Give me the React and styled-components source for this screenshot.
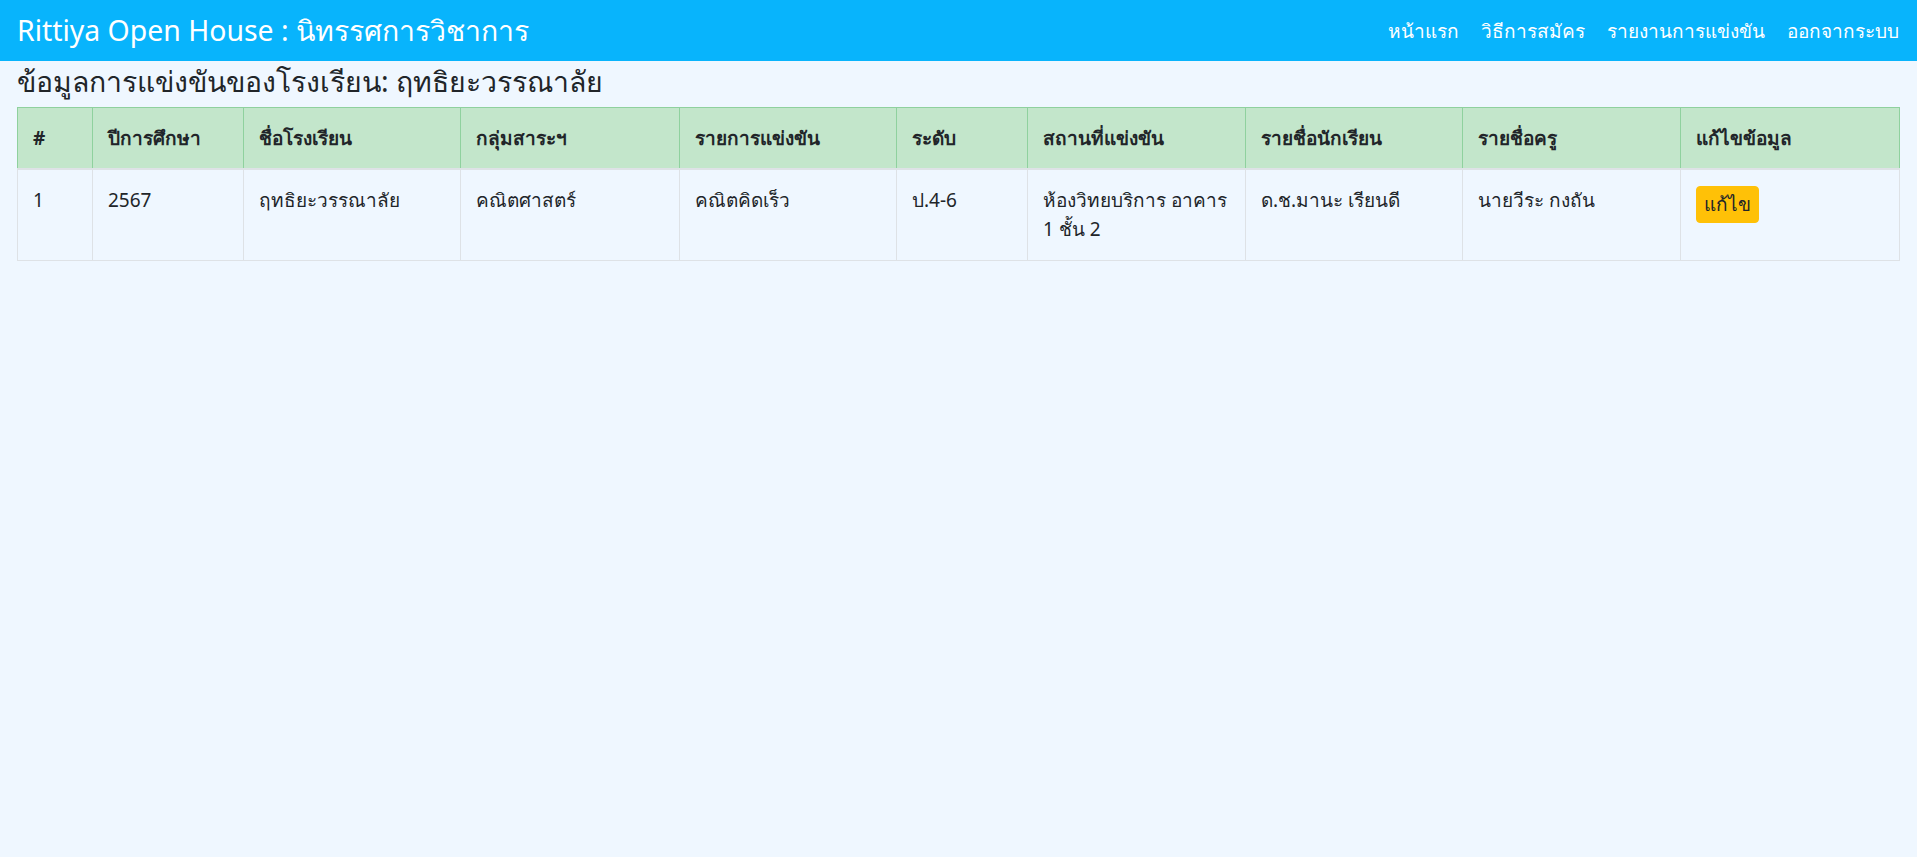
import React from "react";
import styled, { createGlobalStyle } from "styled-components";

const GlobalStyle = createGlobalStyle`
  html, body {
    margin: 0;
    padding: 0;
    background: #eff7ff;
    font-family: Tahoma, "Noto Sans", "DejaVu Sans", sans-serif;
    color: #212529;
  }
`;

const competitions = [
  {
    id: 1,
    year: "2567",
    school: "ฤทธิยะวรรณาลัย",
    group: "คณิตศาสตร์",
    event: "คณิตคิดเร็ว",
    level: "ป.4-6",
    place: "ห้องวิทยบริการ อาคาร 1 ชั้น 2",
    students: "ด.ช.มานะ เรียนดี",
    teachers: "นายวีระ กงถัน",
  },
];

const columns = [
  { label: "#", width: 75 },
  { label: "ปีการศึกษา", width: 151 },
  { label: "ชื่อโรงเรียน", width: 217 },
  { label: "กลุ่มสาระฯ", width: 219 },
  { label: "รายการแข่งขัน", width: 217 },
  { label: "ระดับ", width: 131 },
  { label: "สถานที่แข่งขัน", width: 218 },
  { label: "รายชื่อนักเรียน", width: 217 },
  { label: "รายชื่อครู", width: 218 },
  { label: "แก้ไขข้อมูล", width: 219 },
];

const App = () => {
  return (
    <Wrapper>
      <GlobalStyle />
      <Navbar>
        <Brand href="#">Rittiya Open House : นิทรรศการวิชาการ</Brand>
        <NavLinks>
          <NavLink href="#">หน้าแรก</NavLink>
          <NavLink href="#">วิธีการสมัคร</NavLink>
          <NavLink href="#">รายงานการแข่งขัน</NavLink>
          <NavLink href="#">ออกจากระบบ</NavLink>
        </NavLinks>
      </Navbar>
      <Content>
        <Title>ข้อมูลการแข่งขันของโรงเรียน: ฤทธิยะวรรณาลัย</Title>
        <Table>
          <colgroup>
            {columns.map((c) => (
              <col key={c.label} style={{ width: c.width }} />
            ))}
          </colgroup>
          <thead>
            <tr>
              {columns.map((c) => (
                <Th key={c.label}>{c.label}</Th>
              ))}
            </tr>
          </thead>
          <tbody>
            {competitions.map((row) => (
              <tr key={row.id}>
                <Td>{row.id}</Td>
                <Td>{row.year}</Td>
                <Td>{row.school}</Td>
                <Td>{row.group}</Td>
                <Td>{row.event}</Td>
                <Td>{row.level}</Td>
                <Td>{row.place}</Td>
                <Td>{row.students}</Td>
                <Td>{row.teachers}</Td>
                <Td>
                  <EditButton>แก้ไข</EditButton>
                </Td>
              </tr>
            ))}
          </tbody>
        </Table>
      </Content>
    </Wrapper>
  );
};

const Wrapper = styled.div`
  width: 100%;
  min-height: 100vh;
  background-color: #eff7ff;
`;

const Navbar = styled.nav`
  display: flex;
  align-items: center;
  justify-content: space-between;
  height: 61px;
  padding: 0 18px 0 17px;
  background-color: #08b4fc;
  box-sizing: border-box;
`;

const Brand = styled.a`
  color: #fff;
  font-size: 28.4px;
  text-decoration: none;
  white-space: nowrap;
`;

const NavLinks = styled.div`
  display: flex;
  gap: 22px;
`;

const NavLink = styled.a`
  color: #fff;
  font-size: 19px;
  text-decoration: none;
  white-space: nowrap;
`;

const Content = styled.main`
  padding: 0 18px 0 17px;
`;

const Title = styled.h1`
  margin: 5px 0 10px;
  font-size: 28.4px;
  font-weight: 400;
  line-height: 31px;
`;

const Table = styled.table`
  width: 100%;
  table-layout: fixed;
  border-collapse: collapse;
  font-size: 19px;
  line-height: 29px;
`;

const Th = styled.th`
  padding: 16px 15px 15px;
  text-align: left;
  font-weight: 700;
  background-color: #c3e6cb;
  border: 1px solid #8fd19e;
  border-bottom: 2px solid #dee2e6;
  vertical-align: middle;
`;

const Td = styled.td`
  padding: 16px 15px 16px;
  vertical-align: top;
  border: 1px solid #dee2e6;
`;

const EditButton = styled.button`
  display: inline-block;
  padding: 3px 7px;
  font-family: inherit;
  font-size: 19px;
  line-height: 29px;
  color: #212529;
  background-color: #ffc107;
  border: 1px solid #ffc107;
  border-radius: 4px;
  cursor: pointer;
`;

export default App;
